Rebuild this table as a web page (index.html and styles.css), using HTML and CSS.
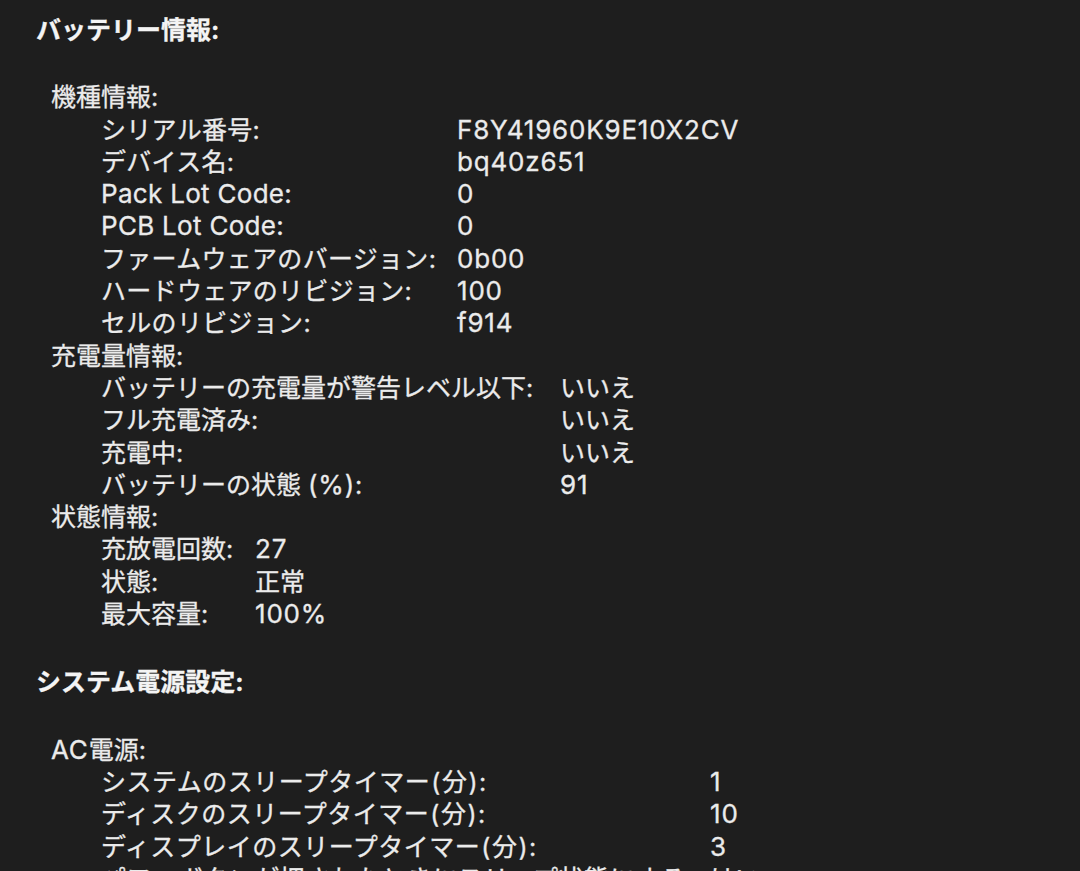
FILE: index.html
```html
<!DOCTYPE html>
<html lang="ja">
<head>
<meta charset="utf-8">
<link rel="stylesheet" href="styles.css">
</head>
<body>
<div class="report">
  <section class="section">
    <h1 class="section-title">バッテリー情報:</h1>
    <div class="group">
      <h2 class="group-title">機種情報:</h2>
      <dl class="rows cols-model">
        <dt>シリアル番号:</dt><dd class="lat">F8Y41960K9E10X2CV</dd>
        <dt>デバイス名:</dt><dd class="lat">bq40z651</dd>
        <dt class="lat">Pack Lot Code:</dt><dd class="lat">0</dd>
        <dt class="lat">PCB Lot Code:</dt><dd class="lat">0</dd>
        <dt>ファームウェアのバージョン:</dt><dd class="lat">0b00</dd>
        <dt>ハードウェアのリビジョン:</dt><dd class="lat">100</dd>
        <dt>セルのリビジョン:</dt><dd class="lat">f914</dd>
      </dl>
    </div>
    <div class="group">
      <h2 class="group-title">充電量情報:</h2>
      <dl class="rows cols-charge">
        <dt>バッテリーの充電量が警告レベル以下:</dt><dd>いいえ</dd>
        <dt>フル充電済み:</dt><dd>いいえ</dd>
        <dt>充電中:</dt><dd>いいえ</dd>
        <dt>バッテリーの状態 <span class="lat">(%)</span>:</dt><dd class="lat">91</dd>
      </dl>
    </div>
    <div class="group">
      <h2 class="group-title">状態情報:</h2>
      <dl class="rows cols-health">
        <dt>充放電回数:</dt><dd class="lat">27</dd>
        <dt>状態:</dt><dd>正常</dd>
        <dt>最大容量:</dt><dd class="lat">100%</dd>
      </dl>
    </div>
  </section>
  <section class="section section-next">
    <h1 class="section-title">システム電源設定:</h1>
    <div class="group">
      <h2 class="group-title"><span class="lat">AC</span>電源:</h2>
      <dl class="rows cols-ac">
        <dt>システムのスリープタイマー<span class="paren">(分)</span>:</dt><dd class="lat">1</dd>
        <dt>ディスクのスリープタイマー<span class="paren">(分)</span>:</dt><dd class="lat">10</dd>
        <dt>ディスプレイのスリープタイマー<span class="paren">(分)</span>:</dt><dd class="lat">3</dd>
        <dt>パワーボタンが押されたときにスリープ状態にする:</dt><dd>はい</dd>
      </dl>
    </div>
  </section>
</div>
</body>
</html>
```
FILE: styles.css
```css
html, body {
  margin: 0;
  padding: 0;
  background: #1e1e1e;
  height: 100%;
  overflow: hidden;
}
body {
  font-family: Inter, "Noto Sans CJK JP", sans-serif;
  font-size: 25px;
  line-height: 32.3px;
  color: #ebebeb;
  -webkit-text-stroke: 0.3px currentColor;
}
.report {
  padding: 14px 0 0 36px;
}
.section-title {
  margin: 0 0 35px 0;
  font-size: 25px;
  line-height: 32.3px;
  font-weight: 700;
  color: #f4f4f4;
}
.section-next {
  margin-top: 36px;
}
.group {
  margin-left: 15px;
}
.group-title {
  margin: 0;
  font-size: 25px;
  line-height: 32.3px;
  font-weight: 400;
}
.rows {
  margin: 0 0 0 50px;
  display: grid;
  column-gap: 0;
}
.rows dt, .rows dd {
  margin: 0;
  white-space: nowrap;
}
.lat {
  font-size: 26px;
  letter-spacing: 0.8px;
}
.paren {
  letter-spacing: 1.5px;
  margin-left: 1px;
}
.cols-model dt { letter-spacing: 0.3px; }
.cols-ac dt { letter-spacing: 0.5px; }
.cols-model { grid-template-columns: 356px 1fr; }
.cols-charge { grid-template-columns: 459px 1fr; }
.cols-health { grid-template-columns: 154px 1fr; }
.cols-ac { grid-template-columns: 609px 1fr; }
```
